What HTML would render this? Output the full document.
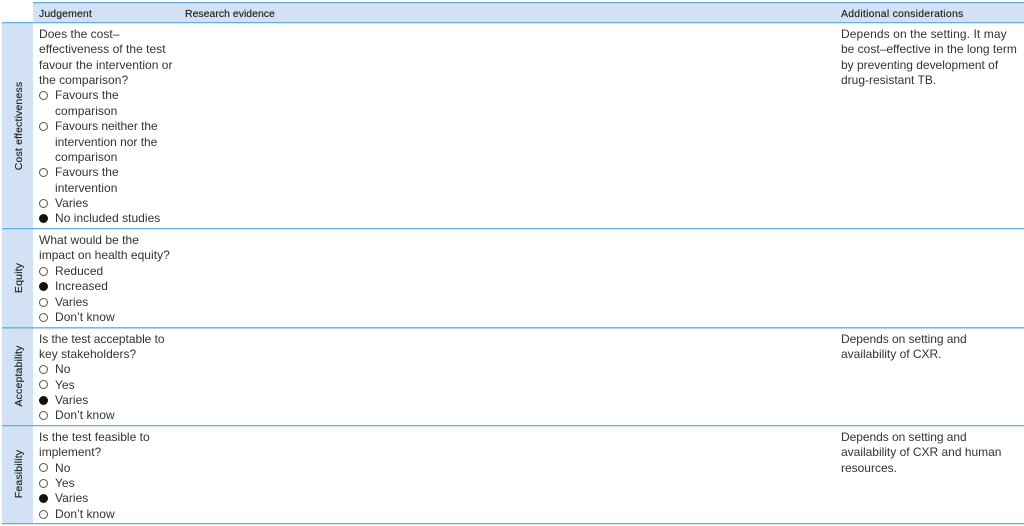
<!DOCTYPE html>
<html>
<head>
<meta charset="utf-8">
<style>
html,body{margin:0;padding:0;background:#fff}
#p{position:relative;width:1024px;height:526px;overflow:hidden;background:#fff;font-family:"Liberation Sans",sans-serif;color:#333;font-size:12px}
.t{position:absolute;white-space:nowrap;line-height:15px;height:15px;letter-spacing:.03px;margin-top:1px}
.r{letter-spacing:-.01px}
.h{font-size:10.5px;color:#222;-webkit-text-stroke:.15px #222}
.b{position:absolute;background:#d2e2f4}
.l{position:absolute;height:1px;background:#62b0dc;box-shadow:0 1px 0 rgba(98,176,220,.3)}
.g{background:#8fb2c4;box-shadow:0 1px 0 rgba(98,176,220,.5)}
.c{position:absolute;left:39px;width:7px;height:7px;border:1px solid #555;border-radius:50%;background:#fff}
.f{background:#111;border-color:#111}
.v{position:absolute;left:18.5px;white-space:nowrap;font-size:10.5px;letter-spacing:.16px;color:#222;-webkit-text-stroke:.15px #222;transform:translate(-50%,-50%) rotate(-90deg)}
</style>
</head>
<body>
<div id="p">
<div class="b" style="left:33px;top:3px;width:991px;height:19px"></div>
<div class="b" style="left:2px;top:23px;width:31px;height:500px"></div>
<div class="l" style="left:33px;top:2px;width:991px"></div>
<div class="l" style="left:2px;top:22px;width:1022px"></div>
<div class="l" style="left:2px;top:228px;width:1022px"></div>
<div class="l g" style="left:2px;top:327px;width:1022px"></div>
<div class="l" style="left:2px;top:425px;width:1022px"></div>
<div class="l" style="left:2px;top:523px;width:1022px"></div>

<div class="t h" style="left:39px;top:6px;letter-spacing:.1px">Judgement</div>
<div class="t h" style="left:185px;top:6px;letter-spacing:.0px">Research evidence</div>
<div class="t h" style="left:841px;top:6px;letter-spacing:.23px">Additional considerations</div>

<div class="v" style="top:125.5px">Cost effectiveness</div>
<div class="v" style="top:278px">Equity</div>
<div class="v" style="top:376px">Acceptability</div>
<div class="v" style="top:474px">Feasibility</div>

<div class="t" style="left:39px;top:26px">Does the cost–</div>
<div class="t" style="left:39px;top:41px">effectiveness of the test</div>
<div class="t" style="left:39px;top:57px">favour the intervention or</div>
<div class="t" style="left:39px;top:72px">the comparison?</div>
<div class="c" style="top:91px"></div><div class="t" style="left:55px;top:87px">Favours the</div>
<div class="t" style="left:55px;top:103px">comparison</div>
<div class="c" style="top:122px"></div><div class="t" style="left:55px;top:118px;letter-spacing:-.04px">Favours neither the</div>
<div class="t" style="left:55px;top:134px;letter-spacing:-.02px">intervention nor the</div>
<div class="t" style="left:55px;top:149px">comparison</div>
<div class="c" style="top:168px"></div><div class="t" style="left:55px;top:164px">Favours the</div>
<div class="t" style="left:55px;top:180px">intervention</div>
<div class="c" style="top:199px"></div><div class="t" style="left:55px;top:195px">Varies</div>
<div class="c f" style="top:214px"></div><div class="t" style="left:55px;top:210px">No included studies</div>

<div class="t" style="left:39px;top:232px">What would be the</div>
<div class="t" style="left:39px;top:247px">impact on health equity?</div>
<div class="c" style="top:267px"></div><div class="t" style="left:55px;top:263px">Reduced</div>
<div class="c f" style="top:282px"></div><div class="t" style="left:55px;top:278px">Increased</div>
<div class="c" style="top:298px"></div><div class="t" style="left:55px;top:294px">Varies</div>
<div class="c" style="top:313px"></div><div class="t" style="left:55px;top:309px">Don’t know</div>

<div class="t" style="left:39px;top:331px;letter-spacing:-.05px">Is the test acceptable to</div>
<div class="t" style="left:39px;top:346px">key stakeholders?</div>
<div class="c" style="top:365px"></div><div class="t" style="left:55px;top:361px">No</div>
<div class="c" style="top:380px"></div><div class="t" style="left:55px;top:377px">Yes</div>
<div class="c f" style="top:396px"></div><div class="t" style="left:55px;top:392px">Varies</div>
<div class="c" style="top:411px"></div><div class="t" style="left:55px;top:407px">Don’t know</div>

<div class="t" style="left:39px;top:429px">Is the test feasible to</div>
<div class="t" style="left:39px;top:444px">implement?</div>
<div class="c" style="top:463px"></div><div class="t" style="left:55px;top:460px">No</div>
<div class="c" style="top:479px"></div><div class="t" style="left:55px;top:475px">Yes</div>
<div class="c f" style="top:494px"></div><div class="t" style="left:55px;top:490px">Varies</div>
<div class="c" style="top:510px"></div><div class="t" style="left:55px;top:506px">Don’t know</div>

<div class="t r" style="left:841px;top:26px;letter-spacing:.1px">Depends on the setting. It may</div>
<div class="t r" style="left:841px;top:41px;letter-spacing:0">be cost–effective in the long term</div>
<div class="t r" style="left:841px;top:57px;letter-spacing:-.01px">by preventing development of</div>
<div class="t r" style="left:841px;top:72px;letter-spacing:0">drug-resistant TB.</div>

<div class="t r" style="left:841px;top:331px;letter-spacing:-.05px">Depends on setting and</div>
<div class="t r" style="left:841px;top:346px">availability of CXR.</div>

<div class="t r" style="left:841px;top:429px;letter-spacing:-.05px">Depends on setting and</div>
<div class="t r" style="left:841px;top:444px">availability of CXR and human</div>
<div class="t r" style="left:841px;top:460px">resources.</div>
</div>
</body>
</html>
